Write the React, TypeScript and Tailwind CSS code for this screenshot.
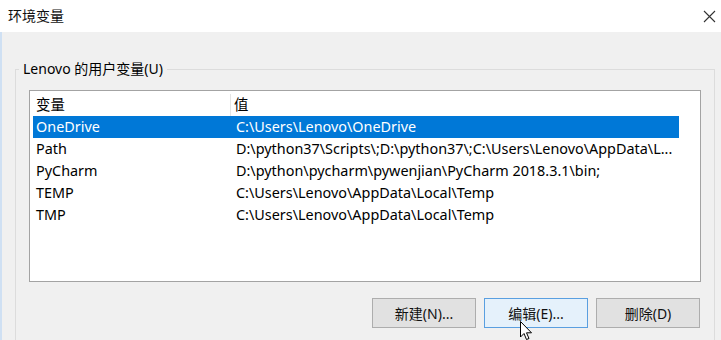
import React from 'react';

const rows = [
  { name: 'OneDrive', value: 'C:\\Users\\Lenovo\\OneDrive', selected: true },
  { name: 'Path', value: 'D:\\python37\\Scripts\\;D:\\python37\\;C:\\Users\\Lenovo\\AppData\\L...' },
  { name: 'PyCharm', value: 'D:\\python\\pycharm\\pywenjian\\PyCharm 2018.3.1\\bin;' },
  { name: 'TEMP', value: 'C:\\Users\\Lenovo\\AppData\\Local\\Temp' },
  { name: 'TMP', value: 'C:\\Users\\Lenovo\\AppData\\Local\\Temp' },
];

const App = () => {
  return (
    <div
      className="relative w-[721px] h-[340px] overflow-hidden flex flex-col text-[14px] text-black"
      style={{ fontFamily: '"Noto Sans", "Noto Sans CJK SC", sans-serif' }}
    >
      {/* Title bar */}
      <div className="h-[32px] bg-white flex items-center justify-between pl-[8px] pr-[5px] shrink-0">
        <span className="leading-[18px] text-[#111]">环境变量</span>
        <svg width="13" height="13" viewBox="0 0 13 13">
          <path d="M1 1 L12 12 M12 1 L1 12" stroke="#333" strokeWidth="1.1" fill="none" />
        </svg>
      </div>

      {/* Body */}
      <div className="flex-1 bg-[#f0f0f0] border-l-2 border-[#cfe0f3] pl-[13px] pr-[6px] pt-[37px]">
        <div className="relative border border-[#dcdcdc] h-[300px] pl-[13px] pr-[13px] pt-[20px]">
          <span className="absolute -top-[10px] left-[3px] px-[4px] bg-[#f0f0f0] leading-[18px]">
            Lenovo 的用户变量(U)
          </span>

          {/* List view */}
          <div className="h-[192px] bg-white border border-[#a3a3a3] pt-[1px] overflow-hidden text-[14.4px]">
            <div className="flex h-[24px] pt-[2px] ml-[3px] items-center">
              <div className="w-[198px] h-full flex items-center pl-[3px] border-r border-[#e5e5e5]">变量</div>
              <div className="flex-1 flex items-center pl-[3px] h-full">值</div>
            </div>
            {rows.map((r) => (
              <div
                key={r.name}
                className={`flex h-[22px] items-center ml-[3px] w-[646px] whitespace-nowrap overflow-hidden ${
                  r.selected ? 'bg-[#0078d7] text-white' : ''
                }`}
              >
                <div className="w-[202px] pl-[3px] shrink-0">{r.name}</div>
                <div className="flex-1 overflow-hidden pl-[1px]">{r.value}</div>
              </div>
            ))}
          </div>

          {/* Buttons */}
          <div className="flex justify-end gap-[8px] mt-[16px] pr-[1px]">
            <button className="w-[104px] h-[30px] bg-[#e1e1e1] border border-[#adadad] flex items-center justify-center text-[#111]">
              新建(N)...
            </button>
            <button className="w-[104px] h-[30px] bg-[#e5f1fb] border border-[#5a9fe0] flex items-center justify-center text-[#111]">
              编辑(E)...
            </button>
            <button className="w-[104px] h-[30px] bg-[#e1e1e1] border border-[#adadad] flex items-center justify-center text-[#111]">
              删除(D)
            </button>
          </div>
        </div>
      </div>

      {/* Mouse pointer */}
      <svg
        width="13"
        height="20"
        viewBox="0 0 13 20"
        className="absolute left-[520px] top-[321px]"
      >
        <path
          d="M0.5 0.5 L0.5 16 L4 12.5 L6.5 18.5 L9 17.5 L6.5 11.8 L11.5 11.8 Z"
          fill="#fff"
          stroke="#000"
          strokeWidth="1"
          strokeLinejoin="round"
        />
      </svg>
    </div>
  );
};

export default App;
